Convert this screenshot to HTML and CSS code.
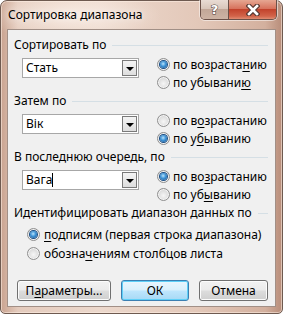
FILE: index.html
```html
<!DOCTYPE html>
<html lang="ru">
<head>
    <meta charset="UTF-8">
    <title>Сортировка диапазона</title>
    <link rel="stylesheet" href="styles.css">
</head>
<body>
    <div class="window">
        <div class="titlebar">
            <span class="title">Сортировка диапазона</span>
            <div class="caption-btns">
                <span class="cap help">?</span>
                <span class="cap close">
                    <svg width="14" height="12" viewBox="0 0 14 12">
                        <path d="M3 2 L11 10 M11 2 L3 10" stroke="#5a3a34" stroke-width="5" stroke-linecap="square"/>
                        <path d="M3 2 L11 10 M11 2 L3 10" stroke="#ffffff" stroke-width="2.6" stroke-linecap="square"/>
                    </svg>
                </span>
            </div>
        </div>
        <div class="client">
            <div class="group">
                <div class="group-head">Сортировать по</div>
                <div class="group-body">
                    <div class="combo"><span class="combo-text">Стать</span><span class="combo-btn"><i></i></span></div>
                    <div class="radios">
                        <label class="radio checked"><span class="dot"></span>по возраста<u>н</u>ию</label>
                        <label class="radio"><span class="dot"></span>по убывани<u>ю</u></label>
                    </div>
                </div>
            </div>
            <div class="group">
                <div class="group-head">Затем по</div>
                <div class="group-body">
                    <div class="combo"><span class="combo-text">Вік</span><span class="combo-btn"><i></i></span></div>
                    <div class="radios">
                        <label class="radio"><span class="dot"></span>по в<u>о</u>зрастанию</label>
                        <label class="radio checked"><span class="dot"></span>по у<u>б</u>ыванию</label>
                    </div>
                </div>
            </div>
            <div class="group">
                <div class="group-head">В последнюю очередь, по</div>
                <div class="group-body">
                    <div class="combo"><span class="combo-text">Вага<span class="caret"></span></span><span class="combo-btn"><i></i></span></div>
                    <div class="radios">
                        <label class="radio checked"><span class="dot"></span>по во<u>з</u>растанию</label>
                        <label class="radio"><span class="dot"></span>по уб<u>ы</u>ванию</label>
                    </div>
                </div>
            </div>
            <div class="group last">
                <div class="group-head">Идентифицировать диапазон данных по</div>
                <div class="radios wide">
                    <label class="radio checked"><span class="dot"></span><u>п</u>одписям (первая строка диапазона)</label>
                    <label class="radio"><span class="dot"></span>обозна<u>ч</u>ениям столбцов листа</label>
                </div>
            </div>
            <div class="buttons">
                <button class="btn params">П<u>а</u>раметры...</button>
                <button class="btn ok">ОК</button>
                <button class="btn cancel">Отмена</button>
            </div>
        </div>
    </div>
</body>
</html>
```

FILE: styles.css
```css
body {
    margin: 0;
    background-color: #ffffff;
    font-family: "Noto Sans", "Open Sans", sans-serif;
    font-size: 12px;
    color: #000000;
}
.window {
    width: 283px;
    height: 314px;
    box-sizing: border-box;
    border: 1px solid #6e5a50;
    border-radius: 7px 7px 5px 5px;
    background:
        radial-gradient(ellipse 90px 26px at 70px 14px, rgba(255, 245, 238, 0.7), rgba(255, 245, 238, 0) 100%),
        linear-gradient(90deg, #c9a390 0%, #e4cbbd 6%, #ecd8cc 35%, #e3c8b9 70%, #d3b09e 94%, #b88d7a 100%);
    box-shadow: inset 0 0 0 1px rgba(255, 240, 230, 0.55);
    display: flex;
    flex-direction: column;
}
.titlebar {
    height: 28px;
    display: flex;
    justify-content: space-between;
    align-items: flex-start;
}
.title {
    margin: 6px 0 0 7px;
    line-height: 16px;
    text-shadow: 0 0 6px rgba(255, 255, 255, 0.9);
}
.caption-btns {
    display: flex;
    margin: -1px 5px 0 0;
    border: 1px solid #6a5048;
    border-top: none;
    border-radius: 0 0 5px 5px;
    overflow: hidden;
    box-shadow: 0 0 0 1px rgba(255, 255, 255, 0.5);
}
.cap {
    height: 19px;
    display: flex;
    align-items: center;
    justify-content: center;
}
.help {
    width: 27px;
    border-right: 1px solid #6a5048;
    background: linear-gradient(#e9dcd4 0%, #d9c6bb 45%, #c2a798 50%, #cdb3a4 100%);
    color: #ffffff;
    font-family: "DejaVu Sans", sans-serif;
    font-weight: bold;
    font-size: 13px;
    -webkit-text-stroke: 1px #4a3a35;
    paint-order: stroke fill;
}
.close {
    width: 47px;
    background: linear-gradient(#e6a792 0%, #d7735d 45%, #c2432c 50%, #d2644a 85%, #e08d72 100%);
}
.client {
    flex: 1;
    margin: 0 6px 6px 6px;
    border: 1px solid #a18f86;
    background-color: #f0f0f0;
    display: flex;
    flex-direction: column;
    padding: 7px 7px 0 6px;
}
.group + .group {
    margin-top: 2px;
}
.group-head {
    display: flex;
    align-items: center;
    height: 16px;
    line-height: 16px;
}
.group-head::after {
    content: "";
    flex: 1;
    height: 1px;
    margin-left: 6px;
    background-color: #d5dfe5;
}
.group-body {
    display: flex;
    align-items: flex-start;
}
.combo {
    width: 117px;
    height: 20px;
    box-sizing: border-box;
    margin: 5px 18px 0 8px;
    border: 1px solid #a7a7a7;
    background-color: #ffffff;
    display: flex;
}
.combo-text {
    flex: 1;
    padding-left: 3px;
    line-height: 18px;
    display: flex;
    align-items: center;
}
.caret {
    width: 1px;
    height: 14px;
    background-color: #000000;
}
.combo-btn {
    width: 15px;
    margin: 1px;
    box-sizing: border-box;
    border: 1px solid #7a7a7a;
    background: linear-gradient(#f4f4f4, #dedede);
    display: flex;
    align-items: center;
    justify-content: center;
}
.combo-btn i {
    width: 0;
    height: 0;
    border-left: 4px solid transparent;
    border-right: 4px solid transparent;
    border-top: 4px solid #000000;
    margin-top: 1px;
}
.radios {
    display: flex;
    flex-direction: column;
    margin-top: 2px;
}
.radio {
    display: flex;
    align-items: center;
    height: 18px;
    white-space: nowrap;
}
.radios.wide {
    margin: 4px 0 0 13px;
}
.radios.wide .radio {
    height: 19px;
}
.radios.wide .dot {
    margin-right: 4px;
}
.dot {
    width: 13px;
    height: 13px;
    box-sizing: border-box;
    margin-right: 3px;
    border-radius: 50%;
    border: 1px solid #8f8f8f;
    background: radial-gradient(circle at 50% 60%, #f6f6f6 0%, #dedede 55%, #c9c9c9 100%);
    box-shadow: inset 0 0 0 1px #f4f4f4;
    display: flex;
    align-items: center;
    justify-content: center;
}
.radio.checked .dot::after {
    content: "";
    width: 7px;
    height: 7px;
    border-radius: 50%;
    background: radial-gradient(circle at 45% 40%, #b9e3fb 0%, #3d93d6 45%, #16508f 100%);
    box-shadow: 0 0 0 1px #1b4f86;
}
u {
    text-decoration-thickness: 1px;
    text-underline-offset: 2px;
}
.buttons {
    display: flex;
    gap: 10px;
    margin: 17px 0 0 3px;
}
.btn {
    height: 21px;
    padding: 0;
    font-family: inherit;
    font-size: 12px;
    color: #000000;
    border: 1px solid #707070;
    border-radius: 3px;
    background: linear-gradient(#f2f2f2 0%, #ebebeb 48%, #dddddd 52%, #cfcfcf 100%);
    box-shadow: inset 0 0 0 1px #fcfcfc;
}
.params {
    width: 94px;
}
.ok {
    width: 68px;
    border-color: #3c7fb1;
    background: linear-gradient(#eaf6fd 0%, #d9f0fc 48%, #bee6fd 52%, #a7d9f5 100%);
    box-shadow: inset 0 0 0 1px #5fd0f8;
}
.cancel {
    width: 69px;
}
```
